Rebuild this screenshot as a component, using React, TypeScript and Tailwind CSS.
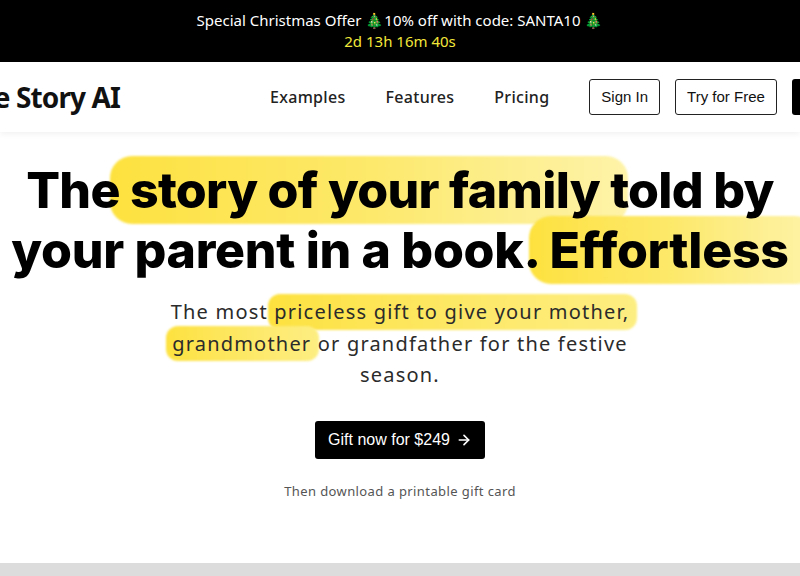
import { ArrowRight } from 'lucide-react';

const body = { fontFamily: '"Noto Sans", "DejaVu Sans", sans-serif' };
const heading = { fontFamily: 'Inter, "Noto Sans", sans-serif' };
const arial = { fontFamily: '"Liberation Sans", Arial, sans-serif' };

function Highlight({ children, strong = false }: { children: React.ReactNode; strong?: boolean }) {
  return (
    <span className="relative inline-block">
      <span
        className={
          strong
            ? 'absolute -top-1 -bottom-1 -left-5 -right-7 -z-10 rounded-[22px] bg-gradient-to-r from-[#fde23e] via-[#fde96a] to-[#fef3a8] blur-[1px]'
            : 'absolute -top-0.5 -bottom-0.5 -left-1.5 -right-2 -z-10 rounded-[12px] bg-gradient-to-r from-[#fde23e] to-[#fdee82] blur-[1px]'
        }
      />
      {children}
    </span>
  );
}

export default function App() {
  return (
    <div className="min-h-[576px] overflow-hidden bg-white" style={body}>
      {/* Promo banner */}
      <div className="flex h-[62px] flex-col items-center justify-center bg-black text-[15px] leading-[21px]">
        <p className="text-white">Special Christmas Offer 🎄10% off with code: SANTA10 🎄</p>
        <p className="text-[#f3e73a]">2d 13h 16m 40s</p>
      </div>

      {/* Header */}
      <header className="relative z-10 flex h-[70px] justify-center overflow-hidden bg-white shadow-[0_2px_6px_rgba(0,0,0,0.06)]">
        <div className="flex w-[1100px] shrink-0 items-center">
          <div className="flex w-[270px] justify-end">
            <span className="whitespace-nowrap text-[28px] font-bold tracking-[-0.9px] text-[#111]">Life Story AI</span>
          </div>
          <nav className="ml-[150px] flex items-center gap-10 text-[16px] font-medium tracking-[0.3px] text-[#222]">
            <a>Examples</a>
            <a>Features</a>
            <a>Pricing</a>
          </nav>
          <div className="ml-10 flex items-center gap-[15px] text-[15px]" style={arial}>
            <button className="h-9 rounded-[3px] border border-[#222] px-[11px] text-[#111]">Sign In</button>
            <button className="h-9 rounded-[3px] border border-[#222] px-[11px] text-[#111]">Try for Free</button>
            <button className="h-9 rounded-[3px] bg-black px-4 text-white">Gift a Book</button>
          </div>
        </div>
      </header>

      {/* Hero */}
      <section className="flex flex-col items-center pb-[62px] pt-7 text-center">
        <h1 className="isolate whitespace-nowrap text-[50px] font-extrabold leading-[60px] tracking-[-0.3px] text-black" style={heading}>
          <span className="tracking-[-0.7px]">
            The <Highlight strong>story of your family</Highlight> told by
          </span>
          <br />
          your parent in a book. <Highlight strong>Effortless</Highlight>
        </h1>

        <p className="isolate mt-4 whitespace-nowrap text-[20px] leading-[31.5px] tracking-[1.2px] text-[#2b2b2b]">
          The most <Highlight>priceless gift to give your mother,</Highlight>
          <br />
          <Highlight>grandmother</Highlight> or grandfather for the festive
          <br />
          season.
        </p>

        <button
          className="mt-[30px] flex h-[38px] items-center gap-1.5 rounded-[3px] bg-black px-[13px] text-[16px] text-white"
          style={arial}
        >
          Gift now for $249
          <ArrowRight size={16} strokeWidth={2.5} />
        </button>

        <p className="mt-[22px] text-[13px] leading-5 tracking-[0.4px] text-[#555]">Then download a printable gift card</p>
      </section>

      {/* Next section */}
      <div className="h-[40px] bg-[#dcdcdc]" />
    </div>
  );
}
